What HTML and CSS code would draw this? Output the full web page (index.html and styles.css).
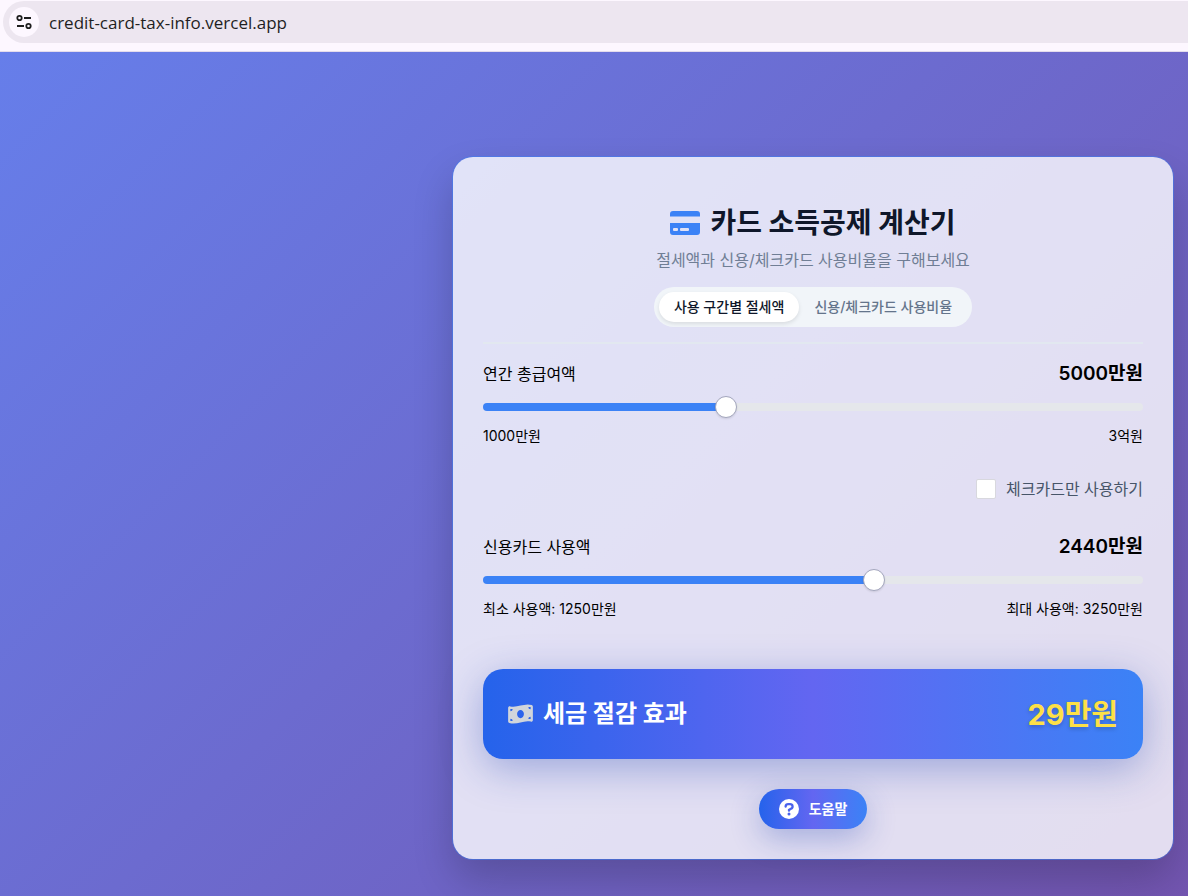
FILE: index.html
```html
<!DOCTYPE html>
<html lang="ko">
<head>
  <meta charset="UTF-8">
  <meta name="viewport" content="width=device-width, initial-scale=1.0">
  <title>카드 소득공제 계산기</title>
  <link rel="stylesheet" href="styles.css">
</head>
<body>

  <header class="browser-bar">
    <div class="address">
      <button type="button" class="site-info" aria-label="사이트 정보">
        <svg width="18" height="18" viewBox="0 0 18 18" fill="none" stroke="#1f1f1f" stroke-width="1.8">
          <circle cx="4.5" cy="5" r="2.2"/>
          <path d="M9 5h7M2 13h7"/>
          <circle cx="13.5" cy="13" r="2.2"/>
        </svg>
      </button>
      <span>credit-card-tax-info.vercel.app</span>
    </div>
  </header>

  <main>
    <div class="card">
      <div class="card-header">
        <h1>
          <svg class="card-icon" viewBox="0 0 30 24" fill="#3b82f6">
            <path d="M3 0h24a3 3 0 0 1 3 3v2.500H0V3a3 3 0 0 1 3-3z"/>
            <path fill-rule="evenodd" d="M0 12h30v9a3 3 0 0 1-3 3H3a3 3 0 0 1-3-3zM4 17a1 1 0 0 0-1 1v1a1 1 0 0 0 1 1h3a1 1 0 0 0 1-1v-1a1 1 0 0 0-1-1zM11 17a1 1 0 0 0-1 1v1a1 1 0 0 0 1 1h7a1 1 0 0 0 1-1v-1a1 1 0 0 0-1-1z"/>
          </svg>
          카드 소득공제 계산기
        </h1>
        <p class="subtitle">절세액과 신용/체크카드 사용비율을 구해보세요</p>
        <div class="tabs">
          <button type="button" class="tab active">사용 구간별 절세액</button>
          <button type="button" class="tab">신용/체크카드 사용비율</button>
        </div>
      </div>

      <div class="field">
        <div class="field-row">
          <label for="salary">연간 총급여액</label>
          <output class="value" for="salary">5000만원</output>
        </div>
        <input type="range" id="salary" min="0" max="11" value="4" style="--fill: 37%">
        <div class="scale"><span>1000만원</span><span>3억원</span></div>
      </div>

      <div class="check-row">
        <input type="checkbox" id="checkOnly">
        <label for="checkOnly">체크카드만 사용하기</label>
      </div>

      <div class="field">
        <div class="field-row">
          <label for="credit">신용카드 사용액</label>
          <output class="value" for="credit">2440만원</output>
        </div>
        <input type="range" id="credit" min="1250" max="3250" step="10" value="2440" style="--fill: 59%">
        <div class="scale"><span>최소 사용액: 1250만원</span><span>최대 사용액: 3250만원</span></div>
      </div>

      <div class="result">
        <h2>
          <svg class="money-icon" viewBox="0 0 576 512" fill="#d1d5db">
            <path fill-rule="evenodd" d="M0 112.500V422.300c0 18 10.100 35 27 41.300 87 32.500 174 10.300 261-11.900 79.800-20.300 159.600-40.700 239.300-18.900 23 6.300 48.700-9.500 48.700-33.400V89.700c0-18-10.100-35-27-41.300C462 15.900 375 38.100 288 60.300 208.200 80.600 128.400 100.900 48.700 79.100 25.600 72.800 0 88.600 0 112.500zM288 352c-44.200 0-80-43-80-96s35.800-96 80-96 80 43 80 96-35.800 96-80 96zM52 368c35.300 0 52 20 52 52H52v-52zm52-228c0 35.300-20 52-52 52v-52h52zM524 320v52h-52c0-35.300 20-52 52-52zM472 92h52v52c-35.300 0-52-20-52-52z"/>
          </svg>
          <span>세금 절감 효과</span>
        </h2>
        <strong>29만원</strong>
      </div>

      <button type="button" class="help">
        <svg width="20" height="20" viewBox="0 0 20 20" fill="none">
          <circle cx="10" cy="10" r="10" fill="#fff"/>
          <path d="M6.600 7.500Q6.900 5.200 9.100 5.200h1.900c3.100 0 3.400 3.400.9 4.600L10 10.900v.8" stroke="#4a62ed" stroke-width="2.300" stroke-linecap="round"/>
          <circle cx="10" cy="15" r="1.500" fill="#4a62ed"/>
        </svg>
        <span>도움말</span>
      </button>
    </div>
  </main>

</body>
</html>
```
FILE: styles.css
```css
* {
  box-sizing: border-box;
}
body {
  margin: 0;
  min-height: 100vh;
  display: flex;
  flex-direction: column;
  font-family: Inter, "Noto Sans CJK KR", sans-serif;
  color: #000;
}
button, input {
  font-family: inherit;
  margin: 0;
}
h1, h2, p {
  margin: 0;
}

/* 주소창 */
.browser-bar {
  height: 52px;
  padding: 1px 0 9px 3px;
  background-color: #fdf7ff;
  border-bottom: 1px solid #e4dcec;
}
.address {
  display: flex;
  align-items: center;
  gap: 10px;
  height: 42px;
  padding-left: 6px;
  border-radius: 21px 0 0 21px;
  background-color: #ede6f0;
  color: #1f1f1f;
  font-family: "Open Sans", sans-serif;
  font-size: 17px;
}
.site-info {
  display: flex;
  align-items: center;
  justify-content: center;
  width: 30px;
  height: 30px;
  padding: 0;
  border: none;
  border-radius: 50%;
  background-color: #fdf7ff;
}

main {
  flex: 1;
  display: flex;
  justify-content: flex-end;
  align-items: center;
  padding: 105px 15px 37px;
  background: linear-gradient(135deg, #667eea 0%, #764ba2 125%);
}
.card {
  width: 100%;
  max-width: 720px;
  padding: 45px 30px 30px;
  border-radius: 20px;
  background-color: rgba(255, 255, 255, 0.8);
  box-shadow: 0 0 0 1px rgba(59, 130, 246, 0.5), 0 20px 40px rgba(0, 0, 0, 0.2);
}
.card-header {
  display: flex;
  flex-direction: column;
  align-items: center;
  padding-bottom: 15px;
  margin-bottom: 15px;
  border-bottom: 2px solid #e2e8f0;
}
h1 {
  display: flex;
  align-items: center;
  gap: 10px;
  margin-bottom: 4px;
  color: #0f172a;
  font-size: 28px;
  font-weight: 700;
  line-height: 42px;
}
.card-icon {
  width: 30px;
  height: 24px;
}
.subtitle {
  margin-bottom: 15px;
  color: #64748b;
  opacity: 0.9;
  font-size: 16px;
  line-height: 24px;
}
.tabs {
  display: flex;
  padding: 5px;
  border-radius: 20px;
  background-color: #f1f5f9;
}
.tab {
  height: 30px;
  padding: 0 15px 2px;
  border: none;
  border-radius: 15px;
  background: none;
  color: #64748b;
  font-size: 14px;
  font-weight: 500;
  cursor: pointer;
}
.tab.active {
  background-color: #fff;
  color: #0f172a;
  box-shadow: 0 2px 4px rgba(0, 0, 0, 0.1);
}

.field {
  display: flex;
  flex-direction: column;
}
.field-row, .scale {
  display: flex;
  justify-content: space-between;
  align-items: center;
}
.field-row {
  margin-bottom: 7px;
  font-size: 16px;
  line-height: 30px;
}
.value {
  font-size: 19px;
  font-weight: 600;
}
.scale {
  margin-top: 8px;
  font-size: 14px;
  line-height: 20px;
}
input[type="range"] {
  appearance: none;
  width: 100%;
  height: 22px;
  background: none;
  cursor: pointer;
}
input[type="range"]::-webkit-slider-runnable-track {
  height: 8px;
  border-radius: 4px;
  background: linear-gradient(to right, #3b82f6 var(--fill), #e5e7eb var(--fill));
}
input[type="range"]::-webkit-slider-thumb {
  appearance: none;
  width: 22px;
  height: 22px;
  margin-top: -7px;
  border: 1px solid #a3a6bd;
  border-radius: 50%;
  background-color: #fff;
  box-shadow: 0 1px 2px rgba(0, 0, 0, 0.1);
}

.check-row {
  display: flex;
  justify-content: flex-end;
  align-items: center;
  gap: 10px;
  margin: 31px 0;
  color: #475569;
  font-size: 16px;
  line-height: 24px;
}
input[type="checkbox"] {
  appearance: none;
  width: 20px;
  height: 20px;
  border: 1px solid #d8d8de;
  border-radius: 2px;
  background-color: #fff;
}

.result {
  display: flex;
  justify-content: space-between;
  align-items: center;
  min-height: 90px;
  margin: 50px 0 30px;
  padding: 0 25px;
  border-radius: 20px;
  background: linear-gradient(to right, #2563eb, #6366f1 50%, #3b82f6);
  box-shadow: 0 10px 40px rgba(30, 64, 175, 0.35);
}
h2 {
  display: flex;
  align-items: center;
  gap: 10px;
  color: #fff;
  font-size: 24px;
  font-weight: 700;
}
h2 span, .result strong {
  padding-bottom: 5px;
}
.money-icon {
  width: 25px;
  height: 22px;
}
.result strong {
  color: #fde047;
  font-size: 29px;
  font-weight: 700;
  text-shadow: 0 2px 4px rgba(0, 0, 0, 0.2);
}
.help {
  display: flex;
  align-items: center;
  gap: 10px;
  height: 40px;
  margin: 0 auto;
  padding: 0 20px;
  border: none;
  border-radius: 20px;
  background: linear-gradient(to right, #2563eb, #6366f1 50%, #3b82f6);
  box-shadow: 0 10px 30px rgba(30, 64, 175, 0.3);
  color: #fff;
  font-size: 14px;
  font-weight: 600;
  cursor: pointer;
}
.help span {
  padding-bottom: 2px;
}
@media (max-width: 600px) {
  main {
    padding: 20px 10px;
  }
  .card {
    padding: 30px 15px;
  }
}
```
